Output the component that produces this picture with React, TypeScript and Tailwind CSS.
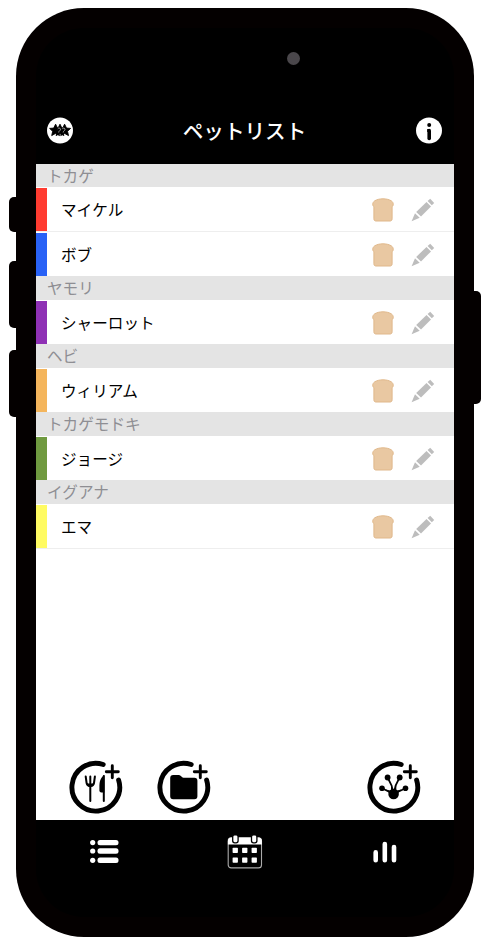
type Pet = { name: string; bar: string; height: string };
type Group = { title: string; height: string; pets: Pet[] };

const groups: Group[] = [
  {
    title: 'トカゲ',
    height: 'h-[23px]',
    pets: [
      { name: 'マイケル', bar: 'bg-[#ff3b30]', height: 'h-[45px]' },
      { name: 'ボブ', bar: 'bg-[#2962f6]', height: 'h-[44px]' },
    ],
  },
  {
    title: 'ヤモリ',
    height: 'h-6',
    pets: [{ name: 'シャーロット', bar: 'bg-[#8f31b5]', height: 'h-[44px]' }],
  },
  {
    title: 'ヘビ',
    height: 'h-6',
    pets: [{ name: 'ウィリアム', bar: 'bg-[#f4b55c]', height: 'h-[44px]' }],
  },
  {
    title: 'トカゲモドキ',
    height: 'h-6',
    pets: [{ name: 'ジョージ', bar: 'bg-[#709a40]', height: 'h-[44px]' }],
  },
  {
    title: 'イグアナ',
    height: 'h-6',
    pets: [{ name: 'エマ', bar: 'bg-[#fffb62]', height: 'h-[44px]' }],
  },
];

function StarsIcon() {
  const star = 'M0-6.2 1.9-2.3 6-2 2.9.9 3.9 5.2 0 3-3.9 5.2-2.9.9-6-2-1.9-2.3Z';
  return (
    <svg width="26" height="27" viewBox="0 0 26 27">
      <circle cx="13" cy="13.5" r="13" fill="#fff" />
      <g stroke="#000" strokeWidth="0.9" strokeLinejoin="round">
        <path d={star} transform="translate(17.6 13.4)" />
        <path d={star} transform="translate(13 13.4)" />
        <path d={star} transform="translate(8.6 13.4)" />
      </g>
      <path
        d="M10.8 11.8c.6-1.1 2.7-.9 2.7.5 0 1.5-1.8 1.5-1.8 3.2M15.3 11.8c.6-1.1 2.7-.9 2.7.5 0 1.5-1.8 1.5-1.8 3.2"
        fill="none"
        stroke="#fff"
        strokeWidth="0.6"
      />
    </svg>
  );
}

function InfoIcon() {
  return (
    <svg width="26" height="27" viewBox="0 0 26 27">
      <circle cx="13" cy="13.5" r="13" fill="#fff" />
      <circle cx="13.2" cy="8" r="2" />
      <path d="M13.2 13.6v7.8" stroke="#000" strokeWidth="3.6" strokeLinecap="round" />
      <path d="M11.2 12h2v3h-2z" />
    </svg>
  );
}

function BreadIcon() {
  return (
    <svg width="22" height="24" viewBox="0 0 22 24">
      <path
        d="M1.9 8.8C.3 7.6.2 4.6 2.600 2.900 7 .1 15 .1 19.400 2.900c2.400 1.700 2.300 4.700.7 5.900v12c0 1.400-.7 2.200-2 2.200H3.900c-1.300 0-2-.8-2-2.200Z"
        fill="#e9c8a2"
        stroke="#e0b88b"
        strokeWidth="1"
      />
    </svg>
  );
}

function PencilIcon() {
  return (
    <svg width="24" height="24" viewBox="0 0 24 24" fill="#bdbdbd">
      <path d="M19.2.7 23.2 4.9 20.8 7.2 16.6 3Z" />
      <path d="M15.5 4 20 8.400 10 18.500 5.200 13.900Z" />
      <path d="M4 15.200 8.700 19.700.6 23.300Z" />
    </svg>
  );
}

function AddButton({ children }: { children: React.ReactNode }) {
  return (
    <svg width="54" height="54" viewBox="0 0 54 54" fill="none" stroke="#000" strokeLinecap="round">
      <path d="M34.2 4.5A23.900 23.900 0 1 0 49.600 20" strokeWidth="4.9" />
      <path d="M43.3 5.7v12M37.3 11.7h12" strokeWidth="2.9" />
      {children}
    </svg>
  );
}

function ForkKnife() {
  return (
    <g>
      <path d="M16.7 16.5 17.6 23q.4 2.800 3.700 2.800T25 23l.9-6.500M21.300 16.500v24.500" strokeWidth="2" />
      <path d="M17.5 23.500h7.600l-2 3.300h-3.600z" fill="#000" stroke="none" />
      <path d="M34.8 16v25" strokeWidth="2" />
      <path d="M35.3 15c-2.800 1.800-4.900 5.500-4.900 10.700v4.700q0 2 2 2h2.900z" fill="#000" stroke="none" />
    </g>
  );
}

function Folder() {
  return (
    <path
      d="M13.2 18a3 3 0 0 1 3-3h5.800c1.800 0 2.600 2.700 4.400 2.700h11a3 3 0 0 1 3 3v15.600a3 3 0 0 1-3 3H16.200a3 3 0 0 1-3-3Z"
      fill="#000"
      stroke="none"
    />
  );
}

function LizardHand() {
  return (
    <g>
      <path
        d="M26.6 34 15 28.300M26.600 34 38.500 28.300M26.600 34 24.600 25.500 20.600 17.500M26.600 34 28.600 25.500 32.600 17.500"
        strokeWidth="1.7"
      />
      <g fill="#000" stroke="none">
        <path d="m19 29.500 7.500 2L34 29.500l-4 4.500h-7zM24 25l2.600 6 2.700-6v8H24z" />
        <circle cx="26.6" cy="34" r="5.300" />
        <circle cx="15" cy="28.300" r="2.800" />
        <circle cx="38.5" cy="28.300" r="2.800" />
        <circle cx="20.6" cy="17.500" r="2.900" />
        <circle cx="32.7" cy="17.500" r="2.900" />
      </g>
    </g>
  );
}

function ListIcon() {
  return (
    <svg className="-mt-0.5" width="29" height="25" viewBox="0 0 29 25" fill="#fff">
      {[3.6, 12, 21.3].map((y) => (
        <g key={y}>
          <circle cx="2.7" cy={y} r="2.6" />
          <rect x="7.5" y={y - 2.7} width="21" height="5.4" rx="2.5" />
        </g>
      ))}
    </svg>
  );
}

function CalendarIcon() {
  return (
    <svg className="mr-0.5" width="36" height="34" viewBox="0 0 36 34" fill="#fff">
      <rect x="1.2" y="2.9" width="33.3" height="30" rx="3" fill="none" stroke="#aaa" strokeWidth="1.1" />
      <path d="M.9 9.4V6a3.500 3.500 0 0 1 3.500-3.500h27A3.500 3.500 0 0 1 34.900 6v3.400Z" />
      {[8.4, 27.2].map((x) => (
        <rect key={x} x={x - 2.7} y="-.2" width="5.4" height="8" rx="2" stroke="#000" strokeWidth="1.3" />
      ))}
      {[12.7, 22.4].map((y) =>
        [5.6, 15.1, 24.6].map((x) => <rect key={`${x}-${y}`} x={x} y={y} width="5.3" height="5.3" rx=".7" />)
      )}
    </svg>
  );
}

function ChartIcon() {
  return (
    <svg width="24" height="22" viewBox="0 0 24 22" stroke="#fff" strokeWidth="4.6" strokeLinecap="round">
      <path d="M2.7 11.400v7.900M11.800 3v16.300M21 6v13.300" />
    </svg>
  );
}

function PetRow({ pet }: { pet: Pet }) {
  return (
    <div className={`flex pt-px ${pet.height}`}>
      <div className={`h-[43px] w-[11px] shrink-0 ${pet.bar}`} />
      <div className="flex h-[43px] flex-1 items-center pr-[19px]">
        <span className="flex-1 pl-3.5 text-[15.6px] leading-none text-black">{pet.name}</span>
        <BreadIcon />
        <span className="ml-[17px]">
          <PencilIcon />
        </span>
      </div>
    </div>
  );
}

export default function App() {
  return (
    <div className="relative h-[947px] w-[488px] overflow-hidden bg-white pt-2 font-['Noto_Sans_CJK_JP',sans-serif]">
      {/* side buttons */}
      <div className="absolute top-[197px] left-[9px] h-[35px] w-5 rounded-[5px] bg-[#040000]" />
      <div className="absolute top-[261px] left-[9px] h-[67px] w-5 rounded-[5px] bg-[#040000]" />
      <div className="absolute top-[350px] left-[9px] h-[67px] w-5 rounded-[5px] bg-[#040000]" />
      <div className="absolute top-[291px] left-[461px] h-[113px] w-5 rounded-[5px] bg-[#040000]" />

      <div className="relative ml-4 h-[929px] w-[458px] rounded-[68px] bg-[#040000] px-5 pt-5">
        <div className="flex h-[889px] flex-col rounded-[48px] bg-black">
          <div className="flex h-[69px] justify-end pr-[154px]">
            <div className="mt-[24px] size-[13px] rounded-full bg-[#4a474b]" />
          </div>

          <header className="flex h-[67px] items-center justify-between pr-[12px] pl-[11px]">
            <StarsIcon />
            <h1 className="text-[20.6px] leading-none font-medium text-white">ペットリスト</h1>
            <InfoIcon />
          </header>

          <main className="flex h-[656px] flex-col bg-white">
            {groups.map((group) => (
              <section key={group.title}>
                <h2
                  className={`flex items-center bg-[#e4e4e4] pl-[11px] text-[15.6px] leading-none text-[#8e8e93] ${group.height}`}
                >
                  {group.title}
                </h2>
                <div className="divide-y divide-[#eeeeee]">
                  {group.pets.map((pet) => (
                    <PetRow key={pet.name} pet={pet} />
                  ))}
                </div>
              </section>
            ))}
            <div className="border-t border-[#eeeeee]" />
            <div className="mt-auto flex pb-[6px] pl-[33px]">
              <AddButton>
                <ForkKnife />
              </AddButton>
              <span className="ml-[34px]">
                <AddButton>
                  <Folder />
                </AddButton>
              </span>
              <span className="mr-[33px] ml-auto">
                <AddButton>
                  <LizardHand />
                </AddButton>
              </span>
            </div>
          </main>

          <nav className="flex items-center justify-between pt-[15px] pr-[57px] pl-[54px]">
            <ListIcon />
            <CalendarIcon />
            <ChartIcon />
          </nav>
        </div>
      </div>
    </div>
  );
}
